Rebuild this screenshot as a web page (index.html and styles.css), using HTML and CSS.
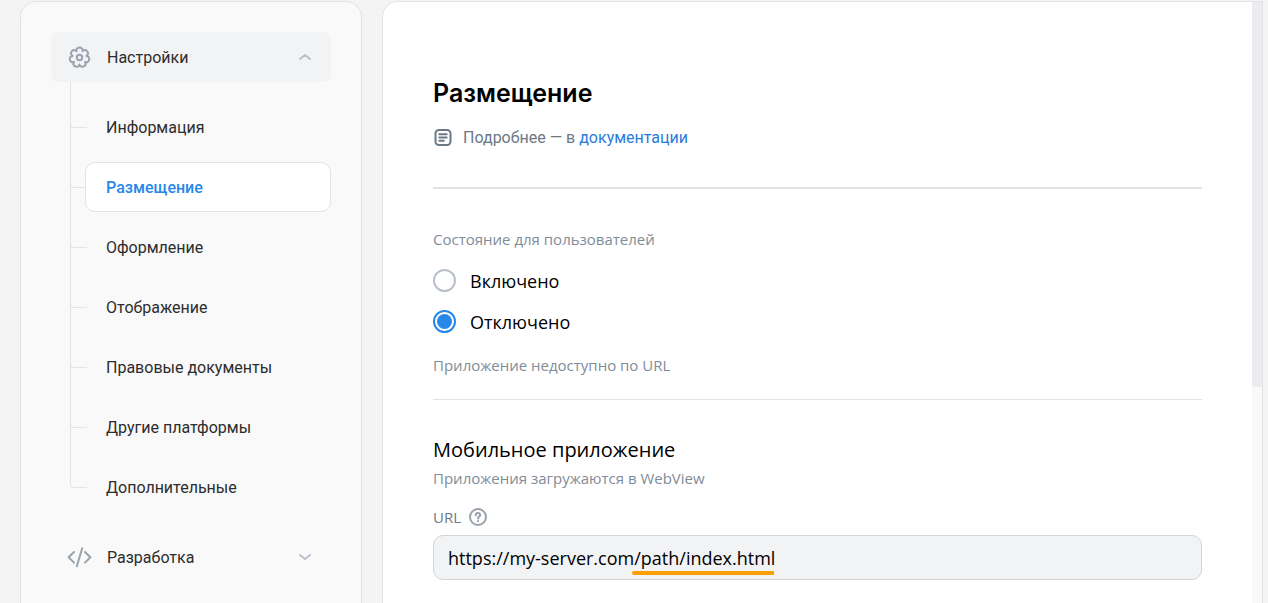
FILE: index.html
```html
<!DOCTYPE html>
<html lang="ru">
    <head>
        <meta charset="utf-8">
        <title>Размещение</title>
        <link rel="stylesheet" href="styles.css">
    </head>
    <body>
        <div class="layout">
            <nav class="sidebar">
                <button class="group active" type="button" aria-expanded="true">
                    <svg class="group-icon" viewBox="0 0 28 28" width="28" height="28">
                        <path d="M11.4 8.2C10.5 3.4 18.5 3.4 17.6 8.2C20.6 4.4 25.7 10.7 21.4 12.9C26.2 13 24.4 20.9 20 18.9C22.9 22.7 15.7 26.2 14.5 21.5C13.3 26.2 6.1 22.7 9 18.9C4.6 20.9 2.8 13 7.6 12.9C3.3 10.7 8.4 4.4 11.4 8.2Z" />
                        <circle cx="14.5" cy="14.5" r="2.7" />
                    </svg>
                    <span>Настройки</span>
                    <svg class="chevron" viewBox="0 0 14 8" width="14" height="8"><path d="M2 6 7 2l5 4" /></svg>
                </button>
                <ul class="tree">
                    <li><a href="#info">Информация</a></li>
                    <li><a href="#hosting" class="current">Размещение</a></li>
                    <li><a href="#design">Оформление</a></li>
                    <li><a href="#display">Отображение</a></li>
                    <li><a href="#legal">Правовые документы</a></li>
                    <li><a href="#platforms">Другие платформы</a></li>
                    <li><a href="#extra">Дополнительные</a></li>
                </ul>
                <button class="group" type="button" aria-expanded="false">
                    <svg class="group-icon" viewBox="0 0 28 28" width="28" height="28">
                        <path d="M9 9 3.6 14.3 9 19.6M20 9l5.4 5.3-5.4 5.3M17.2 5.3l-5.4 18" />
                    </svg>
                    <span>Разработка</span>
                    <svg class="chevron" viewBox="0 0 14 8" width="14" height="8"><path d="M2 2l5 4 5-4" /></svg>
                </button>
            </nav>

            <main class="panel">
                <div class="content">
                    <h1>Размещение</h1>
                    <p class="docs">
                        <svg viewBox="0 0 20 20" width="20" height="20">
                            <rect x="2.5" y="2" width="15" height="15" rx="3.5" />
                            <path d="M6.3 6.3h7.4M6.3 9.5h7.4M6.3 12.7h4.5" />
                        </svg>
                        <span>Подробнее — в <a href="#docs">документации</a></span>
                    </p>

                    <fieldset class="state">
                        <legend>Состояние для пользователей</legend>
                        <label><input type="radio" name="state" value="on"> Включено</label>
                        <label><input type="radio" name="state" value="off" checked> Отключено</label>
                        <p class="hint">Приложение недоступно по URL</p>
                    </fieldset>

                    <section>
                        <h2>Мобильное приложение</h2>
                        <p class="hint">Приложения загружаются в WebView</p>
                        <div class="field-label">
                            <label for="url">URL</label>
                            <svg viewBox="0 0 20 20" width="20" height="20">
                                <circle cx="10" cy="10" r="8" />
                                <path d="M7.8 8.2C7.9 5.2 12.3 5.4 12.2 8.1C12.1 9.7 10 9.6 10 11.4" />
                                <path d="M10 13.9v.3" />
                            </svg>
                        </div>
                        <div class="field">
                            <input type="text" id="url" value="https://my-server.com/path/index.html">
                            <span class="marker"></span>
                        </div>
                    </section>
                </div>
                <div class="scrollbar"><div class="thumb"></div></div>
            </main>
        </div>
    </body>
</html>
```
FILE: styles.css
```css
* { box-sizing: border-box; }

body {
    margin: 0;
    background: #F4F4F4;
    color: #000;
    font-family: "Open Sans", "Noto Sans", sans-serif;
}

h1, h2, p, ul { margin: 0; }

.layout {
    display: flex;
    gap: 20px;
    min-height: 100vh;
    padding: 1px 5px 0 20px;
}

.sidebar {
    flex: none;
    width: 342px;
    padding: 30px 30px 20px;
    border: 1px solid #E1E3E6;
    border-bottom: 0;
    border-radius: 16px 16px 0 0;
    background: #F9F9F9;
    font-family: Roboto, sans-serif;
    font-size: 16px;
}

.group {
    display: flex;
    align-items: center;
    gap: 14px;
    width: 100%;
    height: 50px;
    padding: 0 19px 0 14px;
    border: 0;
    border-radius: 8px;
    background: none;
    color: #2C2D2E;
    font: inherit;
}
.group.active { background: #F2F3F5; }

.group-icon {
    fill: none;
    stroke: #99A2AD;
    stroke-width: 2;
    stroke-linecap: round;
    stroke-linejoin: round;
}

.chevron {
    margin-left: auto;
    fill: none;
    stroke: #B8C1CC;
    stroke-width: 2;
    stroke-linecap: round;
    stroke-linejoin: round;
}

.tree {
    display: flex;
    flex-direction: column;
    gap: 10px;
    padding: 20px 0 20px 34px;
    list-style: none;
}
.tree li { position: relative; }

/* branch line from the previous item */
.tree li::before {
    content: "";
    position: absolute;
    top: -41px;
    left: -15px;
    width: 16px;
    height: 66px;
    border: solid #E1E3E6;
    border-width: 0 0 1px 1px;
    border-bottom-left-radius: 4px;
}
.tree li:first-child::before {
    top: -20px;
    height: 45px;
}

.tree a {
    position: relative;
    display: block;
    height: 50px;
    padding: 1px 20px 0;
    border: 1px solid transparent;
    border-radius: 10px;
    color: #2C2D2E;
    line-height: 48px;
    text-decoration: none;
}
.tree a.current {
    border-color: #E1E3E6;
    background: #FFF;
    color: #2688EB;
    font-weight: 500;
}

.panel {
    display: flex;
    flex: 1;
    border: 1px solid #E1E3E6;
    border-bottom: 0;
    border-radius: 16px 0 0 0;
    background: #FFF;
}

.content {
    flex: 1;
    padding: 75px 50px 20px;
}

h1 {
    font-family: Inter, sans-serif;
    font-weight: 600;
    font-size: 25px;
    line-height: 32px;
}

.docs {
    display: flex;
    align-items: center;
    gap: 10px;
    padding: 17px 0 37px;
    border-bottom: 2px solid #E1E3E6;
    color: #6D7885;
    font-family: Roboto, sans-serif;
    font-size: 16px;
    line-height: 24px;
}
.docs a {
    color: #2A7CDB;
    text-decoration: none;
}
.docs svg {
    fill: none;
    stroke: #6D7885;
    stroke-width: 2;
    stroke-linecap: round;
}

.state {
    margin: 0;
    padding: 39px 0 23px;
    border: 0;
    border-bottom: 1px solid #E1E3E6;
}
.state legend {
    float: left;
    width: 100%;
    padding: 0;
    margin-bottom: 10px;
}
.state legend, .hint, .field-label {
    color: #818C99;
    font-size: 15px;
    line-height: 22px;
}
.state label {
    display: flex;
    clear: both;
    align-items: center;
    gap: 14px;
    height: 41px;
    font-size: 18px;
}
.state .hint { margin-top: 12px; }

input[type="radio"] {
    appearance: none;
    width: 23px;
    height: 23px;
    margin: 0;
    border: 2px solid #B8C1CC;
    border-radius: 50%;
}
input[type="radio"]:checked {
    border-color: #2688EB;
    background: #2688EB;
    background-clip: content-box;
    padding: 2px;
}

h2 {
    padding: 36px 0 3px;
    font-weight: 400;
    font-size: 20px;
    line-height: 28px;
}

.field-label {
    display: flex;
    align-items: center;
    gap: 7px;
    margin: 17px 0 7px;
    color: #6D7885;
}
.field-label svg {
    fill: none;
    stroke: #99A2AD;
    stroke-width: 2;
    stroke-linecap: round;
}

.field { position: relative; }
.field input {
    display: block;
    width: 100%;
    height: 45px;
    padding: 0 14px;
    border: 1px solid #D3D5D8;
    border-radius: 10px;
    background: #F2F3F5;
    color: #000;
    font: 18px "Open Sans", sans-serif;
}
/* underline below the path part of the address */
.marker {
    position: absolute;
    left: 199px;
    bottom: 5px;
    width: 142px;
    height: 4px;
    border-radius: 2px 0 0 2px;
    background: #FFA000;
}

.scrollbar {
    width: 10px;
    background: #F9F9F9;
}
.thumb {
    height: 64%;
    background: #EBECF0;
}
```
